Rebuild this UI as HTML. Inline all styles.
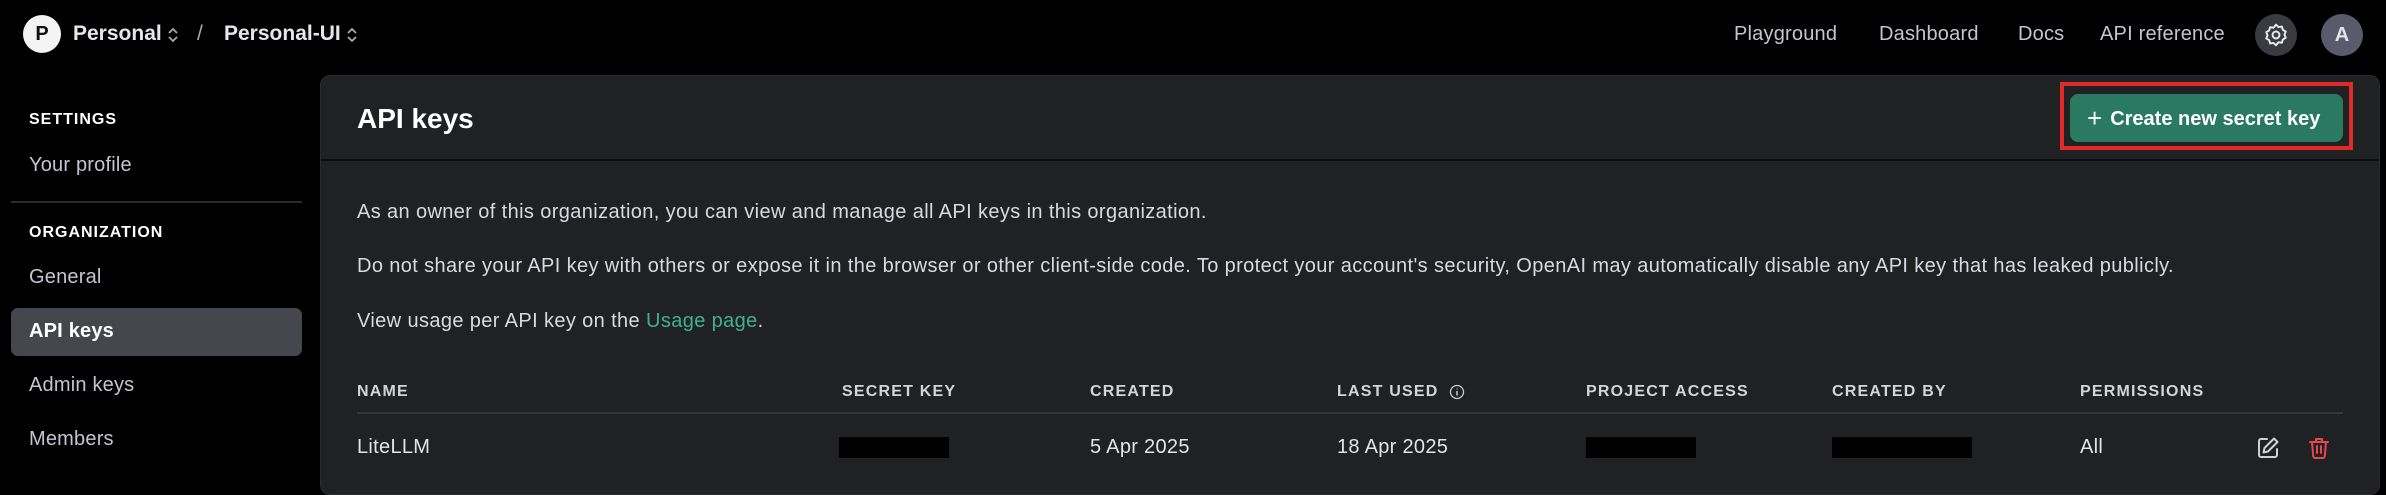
<!DOCTYPE html>
<html><head><meta charset="utf-8"><style>
*{margin:0;padding:0;box-sizing:border-box}
body{width:2386px;height:471px;background:#000;overflow:hidden;font-family:"Liberation Sans",sans-serif;color:#ececf1;position:relative}
.a{position:absolute;white-space:nowrap}
.nav{font-size:20px;color:#c5c5d2;top:23px;letter-spacing:0.2px}
.sh{font-size:16px;font-weight:bold;letter-spacing:1px;color:#fff;left:29px}
.si{font-size:20px;color:#c5c5d2;left:29px;letter-spacing:0.2px}
.panel{position:absolute;left:320px;top:75px;width:2060px;height:420px;background:#202123;border-radius:10px;border:1px solid #2a2b30}
.p{font-size:20px;color:#d9d9e3;left:357px;letter-spacing:0.38px}
.th{font-size:16px;font-weight:bold;letter-spacing:1.2px;color:#d4d4dc;top:383px}
.td{font-size:20px;color:#e3e3ea;top:436px;letter-spacing:0.3px}
.blk{position:absolute;background:#000;top:437px;height:21px}
</style></head><body>
<div class="a" style="left:23px;top:15px;width:38px;height:38px;border-radius:50%;background:#f4f4f4;color:#111;font-size:20px;font-weight:bold;text-align:center;line-height:38px">P</div>
<div class="a" style="left:73px;top:22px;font-size:21px;font-weight:bold;color:#e6e6ec">Personal</div>
<svg class="a" style="left:166px;top:25px" width="14" height="20" viewBox="0 0 14 20"><path d="M3 8l4-4 4 4M3 12l4 4 4-4" stroke="#aaa" stroke-width="1.8" fill="none"/></svg>
<div class="a" style="left:197px;top:22px;font-size:21px;color:#aaa">/</div>
<div class="a" style="left:224px;top:22px;font-size:21px;font-weight:bold;color:#e6e6ec">Personal-UI</div>
<svg class="a" style="left:345px;top:25px" width="14" height="20" viewBox="0 0 14 20"><path d="M3 8l4-4 4 4M3 12l4 4 4-4" stroke="#aaa" stroke-width="1.8" fill="none"/></svg>

<div class="a nav" style="left:1734px">Playground</div>
<div class="a nav" style="left:1879px">Dashboard</div>
<div class="a nav" style="left:2018px">Docs</div>
<div class="a nav" style="left:2100px">API reference</div>
<div class="a" style="left:2255px;top:14px;width:42px;height:42px;border-radius:50%;background:#3a3b40"></div>
<svg class="a" style="left:2263px;top:22px" width="26" height="26" viewBox="0 0 24 24"><path d="M12 2.5l2.3 2.2 3.1-.5.9 3 2.7 1.6-1.2 2.9 1.2 2.9-2.7 1.6-.9 3-3.1-.5L12 21.5l-2.3-2.2-3.1.5-.9-3-2.7-1.6 1.2-2.9-1.2-2.9 2.7-1.6.9-3 3.1.5z" stroke="#e8e8ee" stroke-width="1.8" fill="none" stroke-linejoin="round"/><circle cx="12" cy="12" r="3.2" stroke="#e8e8ee" stroke-width="1.8" fill="none"/></svg>
<div class="a" style="left:2321px;top:14px;width:42px;height:42px;border-radius:50%;background:#595a6c;color:#e3e3ea;font-size:20px;font-weight:bold;text-align:center;line-height:42px">A</div>

<div class="a sh" style="top:111px">SETTINGS</div>
<div class="a si" style="top:154px">Your profile</div>
<div class="a" style="left:11px;top:201px;width:291px;height:2px;background:#2a2b30"></div>
<div class="a sh" style="top:224px">ORGANIZATION</div>
<div class="a si" style="top:266px">General</div>
<div class="a" style="left:11px;top:308px;width:291px;height:48px;border-radius:7px;background:#46474d"></div>
<div class="a si" style="top:320px;color:#fff;font-weight:bold">API keys</div>
<div class="a si" style="top:374px">Admin keys</div>
<div class="a si" style="top:428px">Members</div>

<div class="panel"></div>
<div class="a" style="left:357px;top:103px;font-size:28px;font-weight:bold;color:#fff">API keys</div>
<div class="a" style="left:321px;top:159px;width:2058px;height:2px;background:#0d0d0f"></div>
<div class="a" style="left:2060px;top:82px;width:293px;height:68px;border:4px solid #e02a2a"></div>
<div class="a" style="left:2070px;top:94px;width:273px;height:48px;border-radius:8px;background:#2a7a62;color:#fff;font-size:20px;font-weight:bold;line-height:48px;padding-left:17px"><span style="font-weight:normal;font-size:26px;vertical-align:-2px;margin-right:8px">+</span>Create new secret key</div>

<div class="a p" style="top:201px">As an owner of this organization, you can view and manage all API keys in this organization.</div>
<div class="a p" style="top:255px">Do not share your API key with others or expose it in the browser or other client-side code. To protect your account's security, OpenAI may automatically disable any API key that has leaked publicly.</div>
<div class="a p" style="top:310px">View usage per API key on the <span style="color:#3fb28a">Usage page</span>.</div>

<div class="a th" style="left:357px">NAME</div>
<div class="a th" style="left:842px">SECRET KEY</div>
<div class="a th" style="left:1090px">CREATED</div>
<div class="a th" style="left:1337px">LAST USED</div>
<svg class="a" style="left:1449px;top:384px" width="16" height="16" viewBox="0 0 16 16"><circle cx="8" cy="8" r="6.5" stroke="#c8c8d0" stroke-width="1.3" fill="none"/><path d="M8 7v4.5M8 4.5v.8" stroke="#c8c8d0" stroke-width="1.5"/></svg>
<div class="a th" style="left:1586px">PROJECT ACCESS</div>
<div class="a th" style="left:1832px">CREATED BY</div>
<div class="a th" style="left:2080px">PERMISSIONS</div>
<div class="a" style="left:357px;top:412px;width:1986px;height:2px;background:#35363b"></div>

<div class="a td" style="left:357px">LiteLLM</div>
<div class="blk" style="left:839px;width:110px"></div>
<div class="a td" style="left:1090px">5 Apr 2025</div>
<div class="a td" style="left:1337px">18 Apr 2025</div>
<div class="blk" style="left:1586px;width:110px"></div>
<div class="blk" style="left:1832px;width:140px"></div>
<div class="a td" style="left:2080px">All</div>
<svg class="a" style="left:2256px;top:436px" width="24" height="24" viewBox="0 0 24 24"><path d="M11 3H5a2 2 0 0 0-2 2v14a2 2 0 0 0 2 2h14a2 2 0 0 0 2-2v-6" stroke="#d0d0d8" stroke-width="2" fill="none" stroke-linecap="round"/><path d="M18 2.5l3.5 3.5L12 15.5l-4.5 1 1-4.5z" stroke="#d0d0d8" stroke-width="2" fill="none" stroke-linejoin="round"/></svg>
<svg class="a" style="left:2307px;top:436px" width="24" height="24" viewBox="0 0 24 24"><path d="M3 6h18M9 6V3h6v3M5 6l1.2 14a2 2 0 0 0 2 2h7.6a2 2 0 0 0 2-2L19 6M10 10v7M14 10v7" stroke="#e5484d" stroke-width="2" fill="none" stroke-linecap="round" stroke-linejoin="round"/></svg>
</body></html>
